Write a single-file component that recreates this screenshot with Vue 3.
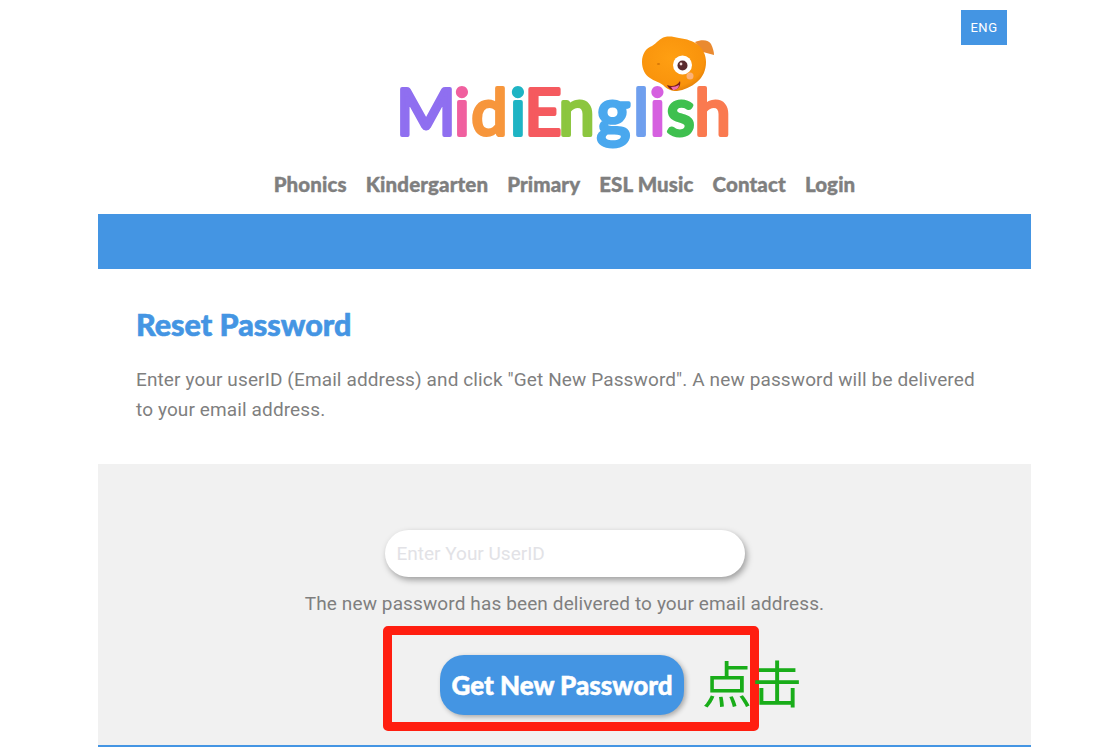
<script setup>
const navItems = ["Phonics", "Kindergarten", "Primary", "ESL Music", "Contact", "Login"];

// one entry per logo letter, cx is the middle of the letter on the page
const logoLetters = [
  { ch: "M", cx: 426, fill: "#8f6ff0" },
  { ch: "i", cx: 462, fill: "#f0609f" },
  { ch: "d", cx: 489.5, fill: "#f7963c" },
  { ch: "i", cx: 518, fill: "#1fb4c4" },
  { ch: "E", cx: 543, fill: "#f55a5f" },
  { ch: "n", cx: 576.5, fill: "#8cc63f" },
  { ch: "g", cx: 613.5, fill: "#4aa8ee" },
  { ch: "l", cx: 641, fill: "#6f9fee" },
  { ch: "i", cx: 657.5, fill: "#d660e0" },
  { ch: "s", cx: 680.5, fill: "#3fc04f" },
  { ch: "h", cx: 712.5, fill: "#fa7a50" },
];
</script>

<template>
  <div class="page">
    <a class="lang">ENG</a>

    <header class="top">
      <svg class="logo" viewBox="395 32 340 130" width="340" height="130">
        <defs>
          <radialGradient id="fishBody" cx="45%" cy="40%" r="65%">
            <stop offset="0%" stop-color="#ff9f12" />
            <stop offset="80%" stop-color="#f9930c" />
            <stop offset="100%" stop-color="#dc7a06" />
          </radialGradient>
        </defs>
        <text
          v-for="(l, i) in logoLetters"
          :key="i"
          class="logo-letter"
          :x="l.cx"
          y="135"
          :fill="l.fill"
          :stroke="l.fill"
        >{{ l.ch }}</text>

        <!-- fish -->
        <path d="M695 42 C702 39 709 40 711 44 C713 48 714 52 714 55 L703 52 Z" fill="#ea8a30" />
        <path
          d="M642 62 C642 54 646 48 652 46 C657 43 660 38 665 37 C670 36 674 37 679 38 C687 39 693 41 698 45 C703 49 706 55 706 62 C706 70 703 77 697 82 C691 87 684 90 677 91 C671 91 667 89 663 85 C659 82 654 81 650 78 C645 75 642 69 642 62 Z"
          fill="url(#fishBody)"
        />
        <circle cx="682.5" cy="65" r="9.5" fill="#fff" />
        <circle cx="682.5" cy="65.5" r="5" fill="#5a2a2e" />
        <circle cx="681" cy="64" r="1.4" fill="#f3dcdc" />
        <circle cx="690" cy="76" r="3.5" fill="#fbb27a" />
        <ellipse cx="658.5" cy="64" rx="1.6" ry="1" fill="#d97a08" />
        <path d="M667 85 C672 87 677 86 680 81 C681 85 679 89 674 90 C671 90 668 88 667 85 Z" fill="#7a1f1f" />
        <path d="M671 87 C674 87 677 86 679 85 C679 88 676 90 673 90 Z" fill="#f06fb0" />
      </svg>

      <nav class="nav">
        <a v-for="item in navItems" :key="item">{{ item }}</a>
      </nav>
    </header>

    <div class="container">
      <div class="band"></div>

      <section class="intro">
        <h1>Reset Password</h1>
        <p>Enter your userID (Email address) and click "Get New Password". A new password will be delivered to your email address.</p>
      </section>

      <section class="form">
        <input class="userid" type="text" placeholder="Enter Your UserID" />
        <p class="msg">The new password has been delivered to your email address.</p>
        <div class="btn-row">
          <button class="submit" type="button">Get New Password</button>
          <!-- annotation drawn on top of the screenshot -->
          <div class="mark"></div>
          <span class="click-note">点击</span>
        </div>
      </section>
    </div>
  </div>
</template>

<style>
html,
body {
  margin: 0;
  background: #fff;
}
</style>

<style scoped>
.page {
  position: relative;
  height: 747px;
  overflow: hidden;
  font-family: Roboto, "Liberation Sans", sans-serif;
}

.lang {
  position: absolute;
  left: 961px;
  top: 10px;
  width: 46px;
  height: 35px;
  line-height: 36px;
  text-align: center;
  background: #4495e3;
  color: #fff;
  font-size: 13px;
  font-weight: 400;
  letter-spacing: 0.5px;
}

.top {
  display: flex;
  flex-direction: column;
  align-items: center;
  margin-left: 98px;
  width: 933px;
  height: 214px;
  padding-top: 32px;
  box-sizing: border-box;
}

.logo {
  display: block;
}

.logo-letter {
  font-family: Lato, sans-serif;
  font-weight: 400;
  font-size: 64px;
  text-anchor: middle;
  stroke-width: 4;
  stroke-linejoin: round;
}

.nav {
  display: flex;
  gap: 19px;
  margin-top: 10px;
  font-family: Lato, sans-serif;
  font-weight: 900;
  font-size: 20.5px;
  letter-spacing: 0.12px;
  line-height: 24px;
  color: #7f7f7f;
  -webkit-text-stroke: 0.4px #7f7f7f;
}

.container {
  margin-left: 98px;
  width: 933px;
}

.band {
  height: 55px;
  background: #4495e3;
}

.intro {
  height: 195px;
  padding: 37px 38px 0;
  box-sizing: border-box;
  color: #7f7f7f;
}

.intro h1 {
  margin: 0;
  font-family: Lato, sans-serif;
  font-weight: 900;
  font-size: 30.5px;
  line-height: 36px;
  color: #4495e3;
  -webkit-text-stroke: 0.6px #4495e3;
}

.intro p {
  margin: 23px 0 0;
  font-size: 19px;
  letter-spacing: 0.12px;
  line-height: 30px;
}

.form {
  display: flex;
  flex-direction: column;
  align-items: center;
  height: 283px;
  padding-top: 66px;
  box-sizing: border-box;
  background: #f1f1f1;
  border-bottom: 2px solid #4495e3;
}

.userid {
  width: 360px;
  height: 47px;
  padding: 0 12px;
  box-sizing: border-box;
  border: none;
  outline: none;
  border-radius: 24px;
  background: #fff;
  box-shadow: 2px 3px 6px rgba(0, 0, 0, 0.35);
  font-family: inherit;
  font-size: 19px;
}

.userid::placeholder {
  color: #e2e2e6;
  opacity: 1;
}

.msg {
  margin: 12px 0 0;
  font-size: 19px;
  letter-spacing: 0.12px;
  line-height: 30px;
  color: #7f7f7f;
}

.btn-row {
  position: relative;
  align-self: flex-start;
  margin: 36px 0 0 342px;
  width: 244px;
}

.submit {
  display: block;
  width: 244px;
  height: 60px;
  padding: 0;
  border: none;
  border-radius: 24px;
  background: #4495e3;
  box-shadow: 2px 2px 5px rgba(0, 0, 0, 0.3);
  color: #fff;
  font-family: Lato, sans-serif;
  font-weight: 900;
  font-size: 26px;
  -webkit-text-stroke: 0.5px #fff;
}

.mark {
  position: absolute;
  left: -57px;
  top: -29px;
  width: 376px;
  height: 105px;
  box-sizing: border-box;
  border: 9px solid #ff1e10;
  border-radius: 5px;
}

.click-note {
  position: absolute;
  left: 262px;
  top: -3px;
  white-space: nowrap;
  font-family: "Noto Sans CJK SC", sans-serif;
  font-weight: 400;
  font-size: 50px;
  line-height: 58px;
  color: #19ad19;
}
</style>
